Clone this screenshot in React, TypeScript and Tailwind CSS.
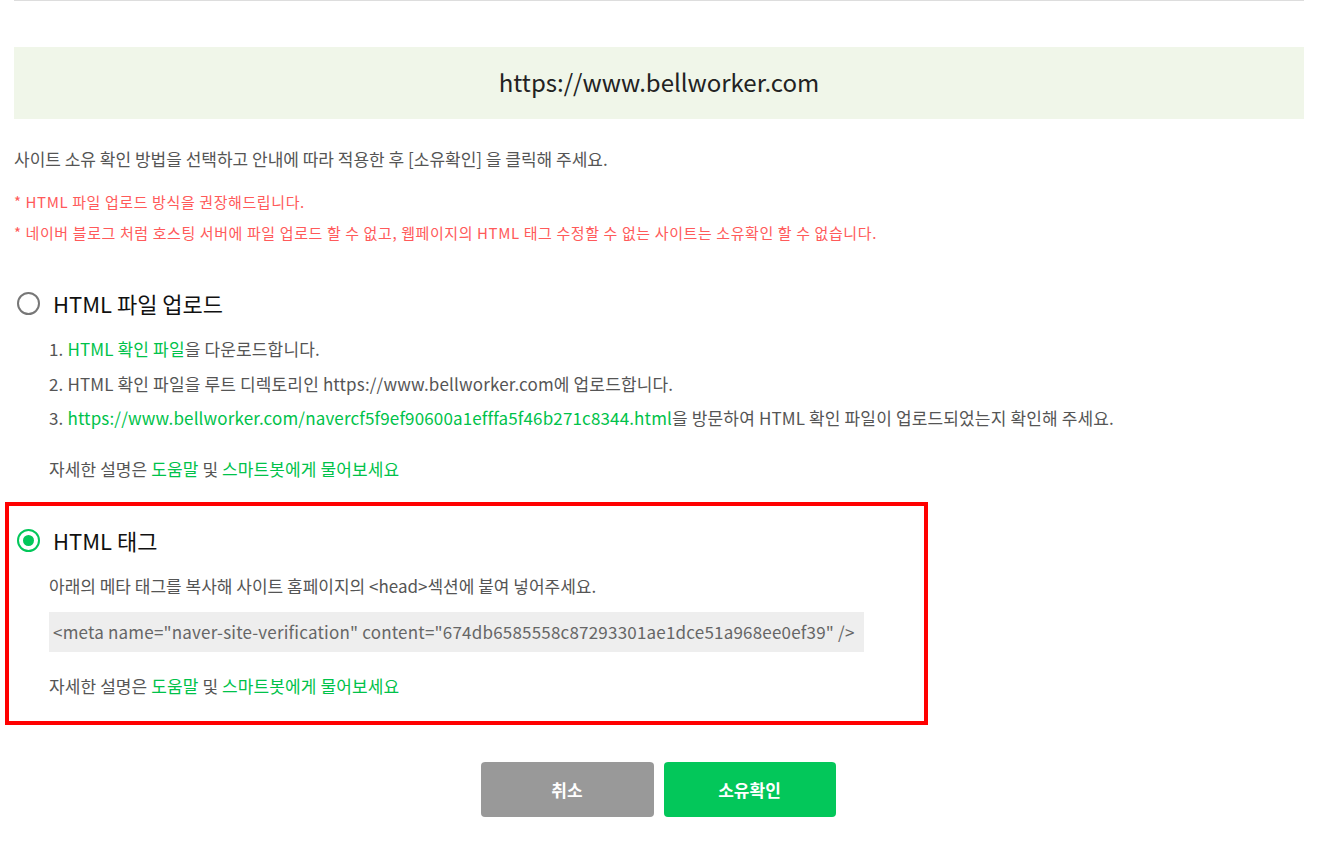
const font = { fontFamily: '"Noto Sans CJK KR", "Noto Sans", sans-serif' };

function Radio({ checked }: { checked: boolean }) {
  return (
    <span
      className={
        'flex h-[23px] w-[23px] shrink-0 items-center justify-center rounded-full border-[2.5px] ' +
        (checked ? 'border-[#03c75a]' : 'border-[#777]')
      }
    >
      {checked && <span className="h-[11px] w-[11px] rounded-full bg-[#03c75a]" />}
    </span>
  );
}

function HelpLine() {
  return (
    <p className="text-[17px] leading-[22px] tracking-[0.1px] text-[#555]">
      자세한 설명은 <span className="text-[#00c24a]">도움말</span> 및{' '}
      <span className="text-[#00c24a]">스마트봇에게 물어보세요</span>
    </p>
  );
}

export default function App() {
  return (
    <main className="min-h-screen bg-white px-[14px] pb-10 pr-[13px]" style={font}>
      <div className="h-px bg-[#ddd]" />

      <div className="mt-[46px] flex h-[72px] items-center justify-center bg-[#f0f6e9] pb-[2px]">
        <span className="text-[24px] tracking-[0px] text-[#222]">https://www.bellworker.com</span>
      </div>

      <p className="mt-[29px] text-[17px] leading-[22px] tracking-[0px] text-[#555]">
        사이트 소유 확인 방법을 선택하고 안내에 따라 적용한 후 [소유확인] 을 클릭해 주세요.
      </p>
      <div className="mt-[22px] space-y-[11px] text-[15px] leading-[20px] tracking-[0.6px] text-[#ff5a5a]">
        <p>* HTML 파일 업로드 방식을 권장해드립니다.</p>
        <p>* 네이버 블로그 처럼 호스팅 서버에 파일 업로드 할 수 없고, 웹페이지의 HTML 태그 수정할 수 없는 사이트는 소유확인 할 수 없습니다.</p>
      </div>

      <section className="mt-[44px] pl-[3px]">
        <div className="flex items-center gap-[13px]">
          <Radio checked={false} />
          <span className="text-[22px] tracking-[0px] text-[#111]">HTML 파일 업로드</span>
        </div>
        <div className="mt-[18px] pl-[32px] text-[17px] leading-[22px] tracking-[0.15px] text-[#555]">
          <ol className="space-y-[12.5px]">
            <li>
              1. <span className="text-[#00c24a]">HTML 확인 파일</span>을 다운로드합니다.
            </li>
            <li>2. HTML 확인 파일을 루트 디렉토리인 https://www.bellworker.com에 업로드합니다.</li>
            <li>
              3.{' '}
              <span className="text-[#00c24a]">
                https://www.bellworker.com/navercf5f9ef90600a1efffa5f46b271c8344.html
              </span>
              을 방문하여 HTML 확인 파일이 업로드되었는지 확인해 주세요.
            </li>
          </ol>
          <div className="mt-[29px]">
            <HelpLine />
          </div>
        </div>
      </section>

      <section className="-ml-[9px] mt-[22px] w-[923px] border-[4px] border-[#ff0000] pb-[24px] pl-[8px] pt-[18px]">
        <div className="flex items-center gap-[13px]">
          <Radio checked />
          <span className="text-[22px] tracking-[0px] text-[#111]">HTML 태그</span>
        </div>
        <div className="mt-[18px] pl-[32px]">
          <p className="text-[17px] leading-[22px] tracking-[0px] text-[#555]">
            아래의 메타 태그를 복사해 사이트 홈페이지의 &lt;head&gt;섹션에 붙여 넣어주세요.
          </p>
          <div className="mt-[15px] flex h-[40px] w-[815px] items-center bg-[#eee] pl-[4px] text-[17px] tracking-[0.2px] text-[#666]">
            &lt;meta name="naver-site-verification" content="674db6585558c87293301ae1dce51a968ee0ef39" /&gt;
          </div>
          <div className="mt-[23px]">
            <HelpLine />
          </div>
        </div>
      </section>

      <div className="mt-[37px] flex justify-center gap-[10px] pr-[2px]">
        <button className="h-[55px] w-[173px] rounded-[4px] bg-[#999] text-[17px] font-bold text-white">
          취소
        </button>
        <button className="h-[55px] w-[172px] rounded-[4px] bg-[#03c75a] text-[17px] font-bold text-white">
          소유확인
        </button>
      </div>
    </main>
  );
}
